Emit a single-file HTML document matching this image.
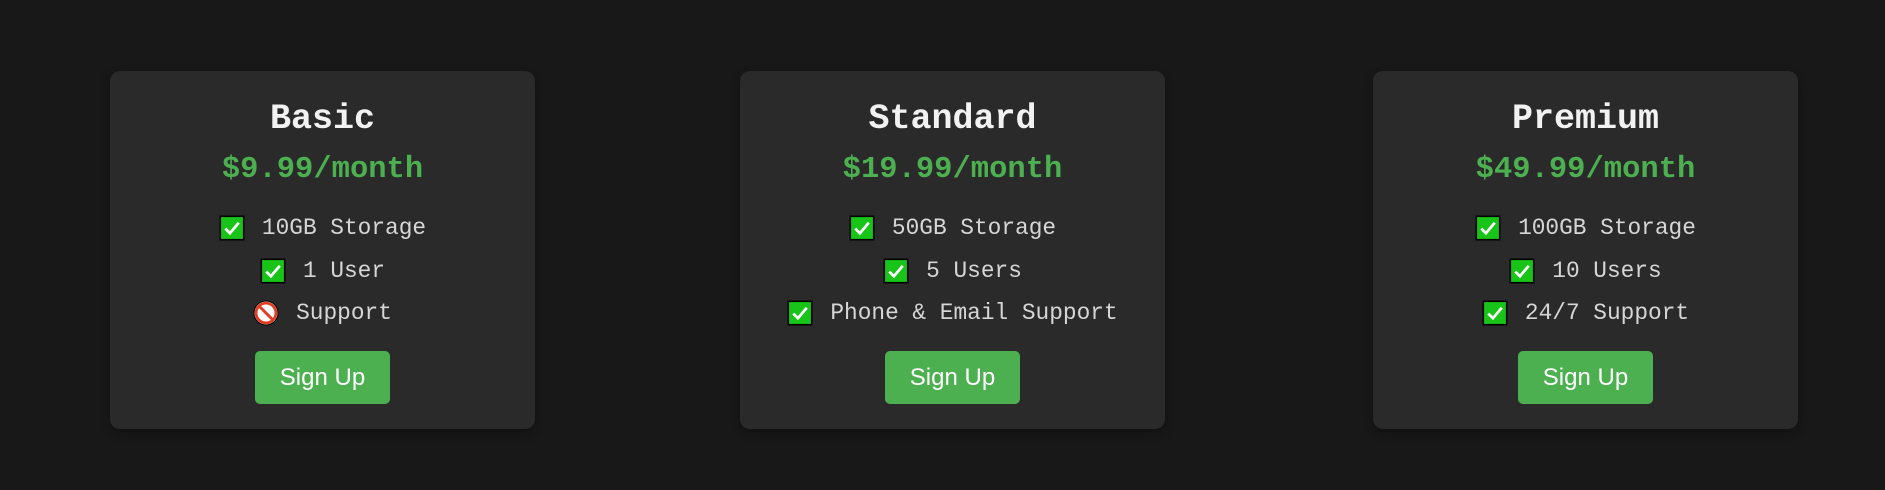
<!DOCTYPE html>
<html><head><style>
html,body{margin:0;padding:0;width:1885px;height:490px;background:#181818;overflow:hidden}
.card{position:absolute;top:71px;width:425px;height:358px;background:#2a2a2a;border-radius:10px;box-shadow:0 4px 10px rgba(0,0,0,.3);text-align:center;font-family:"Liberation Mono",monospace}
h2{margin:0;position:absolute;left:0;right:0;font-size:35px;line-height:44px;color:#f2f2f2;font-weight:bold}
.card h2{top:26px}
.price{position:absolute;top:79px;left:0;right:0;font-size:30.5px;line-height:40px;color:#4caf50;font-weight:bold}
.row{position:absolute;left:0;right:0;display:flex;justify-content:center;align-items:center;font-size:22.8px;color:#d6d6d6;height:30px}
.row svg{margin-right:17px;flex:none}
.btn{position:absolute;top:280px;left:145px;width:135px;height:53px;background:#4caf50;border-radius:5px;color:#fff;font-family:"Liberation Sans",sans-serif;font-size:24px;line-height:53px}
</style></head><body>
<svg width="0" height="0" style="position:absolute"><defs>
<symbol id="c" viewBox="0 0 25 25"><rect x="0.5" y="0.5" width="24" height="24" fill="#000"/><rect x="2" y="2" width="21" height="21" fill="#17c417"/><path d="M6 13 L10.5 17.5 L19 7.5" stroke="#fff" stroke-width="2.6" fill="none"/></symbol>
<symbol id="n" viewBox="0 0 25 25"><circle cx="12.5" cy="12.5" r="11.5" fill="#fff" stroke="#000" stroke-width="1"/><circle cx="12.5" cy="12.5" r="9.5" fill="#fff" stroke="#e43b1e" stroke-width="2.6"/><path d="M6 6 L19 19" stroke="#e43b1e" stroke-width="2.8"/></symbol>
</defs></svg>

<div class="card" style="left:110px">
<h2>Basic</h2><div class="price">$9.99/month</div>
<div class="row" style="top:142px"><svg width="26" height="26"><use href="#c"/></svg>10GB Storage</div>
<div class="row" style="top:185px"><svg width="26" height="26"><use href="#c"/></svg>1 User</div>
<div class="row" style="top:227px"><svg width="26" height="26"><use href="#n"/></svg>Support</div>
<div class="btn">Sign Up</div>
</div>

<div class="card" style="left:740px">
<h2>Standard</h2><div class="price">$19.99/month</div>
<div class="row" style="top:142px"><svg width="26" height="26"><use href="#c"/></svg>50GB Storage</div>
<div class="row" style="top:185px"><svg width="26" height="26"><use href="#c"/></svg>5 Users</div>
<div class="row" style="top:227px"><svg width="26" height="26"><use href="#c"/></svg>Phone &amp; Email Support</div>
<div class="btn">Sign Up</div>
</div>

<div class="card" style="left:1373px">
<h2>Premium</h2><div class="price">$49.99/month</div>
<div class="row" style="top:142px"><svg width="26" height="26"><use href="#c"/></svg>100GB Storage</div>
<div class="row" style="top:185px"><svg width="26" height="26"><use href="#c"/></svg>10 Users</div>
<div class="row" style="top:227px"><svg width="26" height="26"><use href="#c"/></svg>24/7 Support</div>
<div class="btn">Sign Up</div>
</div>
</body></html>
